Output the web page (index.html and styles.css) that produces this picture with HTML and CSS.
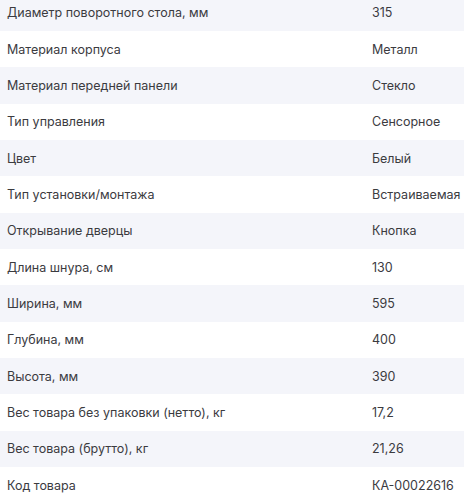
FILE: index.html
```html
<!DOCTYPE html>
<html lang="ru">
<head>
<meta charset="utf-8">
<link rel="stylesheet" href="styles.css">
</head>
<body>
<div class="specs">
  <div class="row"><span class="name">Диаметр поворотного стола, мм</span><span class="val">315</span></div>
  <div class="row"><span class="name">Материал корпуса</span><span class="val">Металл</span></div>
  <div class="row"><span class="name">Материал передней панели</span><span class="val">Стекло</span></div>
  <div class="row"><span class="name">Тип управления</span><span class="val">Сенсорное</span></div>
  <div class="row"><span class="name">Цвет</span><span class="val">Белый</span></div>
  <div class="row"><span class="name">Тип установки/монтажа</span><span class="val">Встраиваемая</span></div>
  <div class="row"><span class="name">Открывание дверцы</span><span class="val">Кнопка</span></div>
  <div class="row"><span class="name">Длина шнура, см</span><span class="val">130</span></div>
  <div class="row"><span class="name">Ширина, мм</span><span class="val">595</span></div>
  <div class="row"><span class="name">Глубина, мм</span><span class="val">400</span></div>
  <div class="row"><span class="name">Высота, мм</span><span class="val">390</span></div>
  <div class="row"><span class="name">Вес товара без упаковки (нетто), кг</span><span class="val">17,2</span></div>
  <div class="row"><span class="name">Вес товара (брутто), кг</span><span class="val">21,26</span></div>
  <div class="row"><span class="name">Код товара</span><span class="val">КА-00022616</span></div>
</div>
</body>
</html>
```

FILE: styles.css
```css
html, body {
  margin: 0;
  padding: 0;
  background: #ffffff;
}

body {
  font-family: Inter, "Noto Sans", sans-serif;
  font-size: 12.5px;
  color: #3b3b3f;
  overflow: hidden;
}

.specs {
  margin-top: -5.3px;
}

.row {
  display: grid;
  grid-template-columns: 365px 1fr;
  align-items: center;
  height: 36.33px;
  padding-left: 7px;
}

.row:nth-child(odd) {
  background: #f4f5fa;
}

.name,
.val {
  white-space: nowrap;
}
```
